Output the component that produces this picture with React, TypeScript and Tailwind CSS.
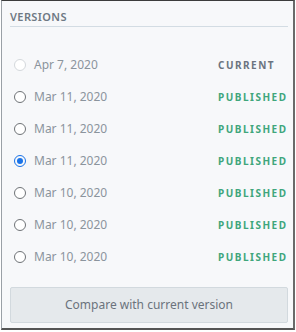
const VERSIONS: { date: string; status: 'current' | 'published'; selected?: boolean }[] = [
  { date: 'Apr 7, 2020', status: 'current' },
  { date: 'Mar 11, 2020', status: 'published' },
  { date: 'Mar 11, 2020', status: 'published' },
  { date: 'Mar 11, 2020', status: 'published', selected: true },
  { date: 'Mar 10, 2020', status: 'published' },
  { date: 'Mar 10, 2020', status: 'published' },
  { date: 'Mar 10, 2020', status: 'published' },
];

function Radio({ selected, disabled }: { selected?: boolean; disabled?: boolean }) {
  if (selected) {
    return (
      <span className="w-[12px] h-[12px] rounded-full border-[1.5px] border-[#1a73e8] flex items-center justify-center shrink-0">
        <span className="w-[6px] h-[6px] rounded-full bg-[#1a73e8]" />
      </span>
    );
  }
  return (
    <span
      className={`w-[12px] h-[12px] rounded-full border-[1.5px] shrink-0 bg-white ${
        disabled ? 'border-[#d4d8dc]' : 'border-[#6f7377]'
      }`}
    />
  );
}

export default function App() {
  return (
    <div className="w-[296px] h-[332px] bg-white font-['Noto_Sans',sans-serif]">
      <div className="ml-[1px] w-[294px] h-[330px] bg-[#f7f8fa] border-l border-t border-l-[#9aa0a6] border-t-[#3c3c3c] border-r-2 border-b-2 border-r-[#6a6a6a] border-b-[#555555] pl-[8px] pr-[5px] pt-[8px]">
        <div className="border-b border-[#d3dce3] pb-[1px]">
          <h2 className="text-[11px] leading-[16px] font-semibold tracking-[0.4px] text-[#6e7883]">VERSIONS</h2>
        </div>

        <div className="mt-[22px]">
          {VERSIONS.map((v, i) => (
            <div key={i} className="h-[32px] flex items-center pl-[4px]">
              <Radio selected={v.selected} disabled={v.status === 'current'} />
              <span className="ml-[8px] text-[12px] text-[#8b949d] flex-1">{v.date}</span>
              <span
                className={`w-[70px] text-[10px] font-bold tracking-[1.5px] ${
                  v.status === 'current' ? 'text-[#6b7480]' : 'text-[#3fa67c]'
                }`}
              >
                {v.status === 'current' ? 'CURRENT' : 'PUBLISHED'}
              </span>
            </div>
          ))}
        </div>

        <button className="mt-[14px] w-[278px] h-[36px] bg-[#e5e9ec] border border-[#d2d9de] rounded-[2px] text-[12px] text-[#6b737c]">
          Compare with current version
        </button>
      </div>
    </div>
  );
}
